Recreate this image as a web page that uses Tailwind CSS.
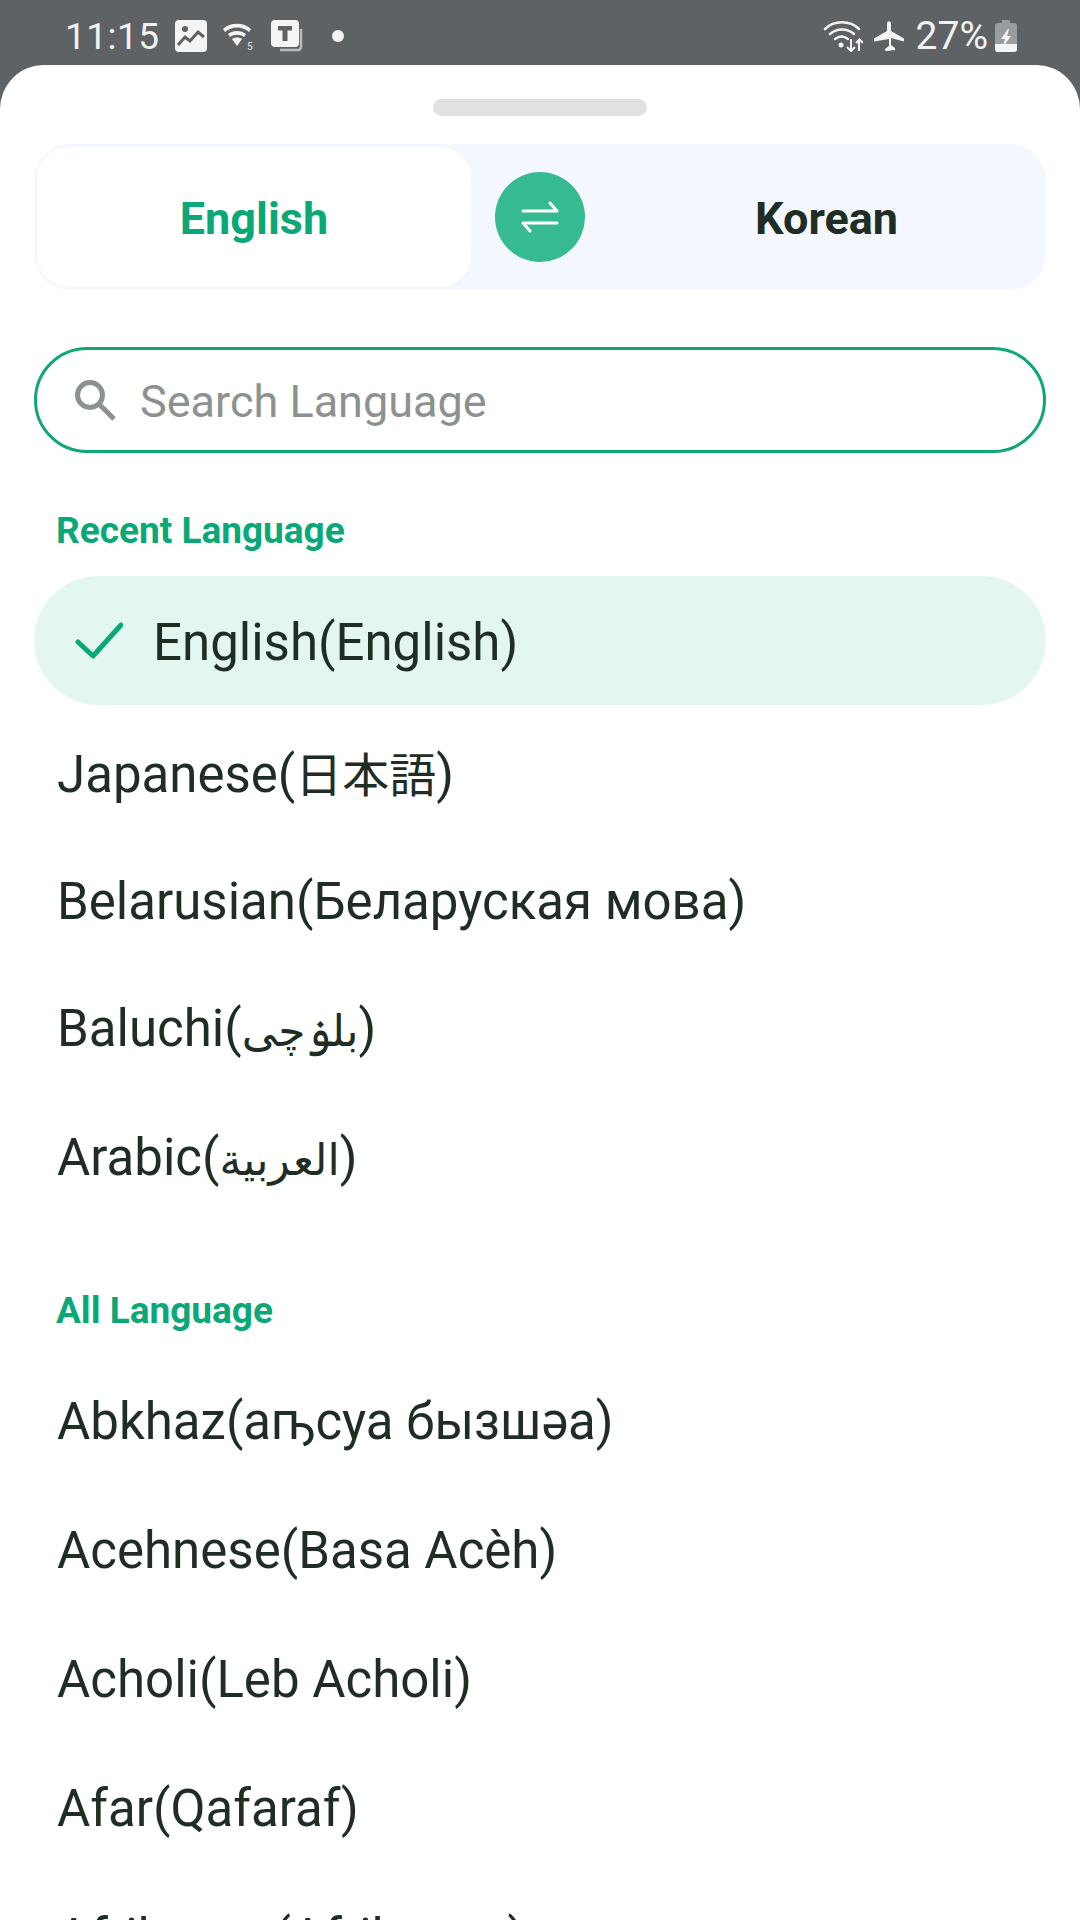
<!DOCTYPE html>
<html lang="en">
  <head>
    <meta charset="UTF-8" />
    <meta name="viewport" content="width=device-width, initial-scale=1.0" />
    <title>Select Language</title>
    <script src="https://cdn.jsdelivr.net/npm/@tailwindcss/browser@4"></script>
  </head>
  <body class="w-[1080px] h-[1920px] overflow-hidden bg-[#5f6265] font-['Roboto','Noto_Sans_CJK_JP','DejaVu_Sans',sans-serif]">
    <!-- Status bar -->
    <div class="h-[65px] flex items-center pt-[7px] pl-[65px] pr-[63px] text-[#f2f2f2]">
      <span class="text-[37px] leading-none tracking-[0.5px]">11:15</span>
      <svg class="ml-[15px]" width="32" height="32" viewBox="0 0 32 32">
        <rect width="32" height="32" rx="4" fill="#f4f4f4" />
        <circle cx="10" cy="9" r="3" fill="#5f6265" />
        <path d="M3 25l7-8 5 4 8-9 6 5" fill="none" stroke="#5f6265" stroke-width="3" />
      </svg>
      <svg class="ml-[15px]" width="32" height="30" viewBox="0 0 32 30">
        <path d="M1 8C8 1 22 1 29 8l-2 3C20 5 10 5 3 11z" fill="#f4f4f4" />
        <path d="M6 13c5-4 13-4 18 0l-2 3c-4-3-10-3-14 0z" fill="#f4f4f4" />
        <path d="M10 18c3-2 7-2 10 0l-5 7z" fill="#f4f4f4" />
        <text x="25" y="29" font-size="10" fill="#e4e4e4">5</text>
      </svg>
      <svg class="ml-[17px]" width="32" height="32" viewBox="0 0 32 32">
        <path d="M30 9v18a3 3 0 0 1-3 3H9" fill="none" stroke="#b9bbb9" stroke-width="2.500" />
        <rect width="28" height="27" rx="4" fill="#f4f4f4" />
        <path d="M7 6h14v4.500h-4.500V21h-5V10.500H7z" fill="#5f6265" />
      </svg>
      <span class="ml-[29px] w-[12px] h-[12px] rounded-full bg-[#f4f4f4]"></span>
      <span class="flex-1"></span>
      <svg width="40" height="32" viewBox="0 0 40 32">
        <path d="M2 9C11 0 27 0 36 9M7 14c7-6 17-6 24 0M12 19c4-3 9-3 13 0" fill="none" stroke="#f4f4f4" stroke-width="2.500" stroke-linecap="round" />
        <circle cx="18" cy="25" r="2.500" fill="#f4f4f4" />
        <path d="M28 18v12M24 26l4 4 4-4" transform="translate(0 1)" fill="none" stroke="#f4f4f4" stroke-width="2" />
        <path d="M36 31V20M33 23l3.500-3.500L40 23" fill="none" stroke="#f4f4f4" stroke-width="2" />
      </svg>
      <svg class="ml-[10px]" width="32" height="30" viewBox="0 0 32 30">
        <path d="M14 2.500c0-3 4-3 4 0V10l13 7.500v3L18 17v7l4 3v2.500l-2-.5-2 .5-6 1v-2.500l4-3v-7L1 20.500v-3L14 10z" fill="#f4f4f4" />
      </svg>
      <span class="ml-[11px] text-[39px] leading-none">27%</span>
      <svg class="ml-[7px]" width="22" height="32" viewBox="0 0 22 32">
        <path d="M7 0h8v3h4a3 3 0 0 1 3 3v23a3 3 0 0 1-3 3H3a3 3 0 0 1-3-3V6a3 3 0 0 1 3-3h4z" fill="#9a9c9d" />
        <path d="M0 24h22v5a3 3 0 0 1-3 3H3a3 3 0 0 1-3-3z" fill="#f4f4f4" />
        <path d="M13 9l-7 10h4l-2 8 8-11h-4l2-7z" fill="#f4f4f4" />
      </svg>
    </div>

    <!-- Bottom sheet -->
    <div class="h-[1855px] bg-white rounded-t-[44px] px-[34px] pt-[34px]">
      <div class="w-[214px] h-[17px] mx-auto rounded-full bg-[#dfe2df]"></div>

      <!-- Source / target toggle -->
      <div class="relative mt-[28px] h-[146px] rounded-[36px] bg-[#f4f8fe] p-[3px] flex items-center">
        <div class="w-[434px] shrink-0 h-[140px] rounded-[32px] bg-white flex items-center justify-center pt-[4px] text-[45px] font-bold text-[#0aa877]">English</div>
        <div class="absolute left-[461px] top-[28px] w-[90px] h-[90px] rounded-full bg-[#36ba92] flex items-center justify-center">
          <svg width="38" height="38" viewBox="0 0 38 38" fill="none" stroke="#fff" stroke-width="3" stroke-linecap="round" stroke-linejoin="round">
            <path d="M2 13h34l-7-8" />
            <path d="M36 25H2l7 8" />
          </svg>
        </div>
        <div class="flex-1 pl-[284px] pt-[4px] text-[45px] font-bold text-[#1f2d24]">Korean</div>
      </div>

      <!-- Search -->
      <div class="mt-[57px] h-[106px] rounded-full border-[3px] border-[#0fa678] flex items-center pl-[36px]">
        <svg width="44" height="44" viewBox="0 0 44 44" fill="none" stroke="#8c928e" stroke-width="5">
          <circle cx="17" cy="17" r="12.500" />
          <path d="M26 26l15 15" />
        </svg>
        <span class="ml-[23px] pt-[4px] text-[45px] text-[#8c928e]">Search Language</span>
      </div>

      <!-- Recent -->
      <div class="mt-[55px] pl-[22px] h-[46px] flex items-center text-[37px] font-bold text-[#0aa877]">Recent Language</div>
      <div class="mt-[22px] h-[129px] rounded-full bg-[#e3f6f0] flex items-center pl-[41px] text-[51px] text-[#1f2d24]">
        <svg width="48" height="38" viewBox="0 0 48 38" fill="none" stroke="#0aa877" stroke-width="5" stroke-linecap="round" stroke-linejoin="round">
          <path d="M3 20l15 14L46 3" />
        </svg>
        <span class="ml-[30px] pt-[5px]">English(English)</span>
      </div>
      <div class="mt-[6px] pl-[23px] text-[51px] text-[#1f2d24]">
        <div class="h-[129px] flex items-center"><span>Japanese(<span class="text-[47px]">日本語</span>)</span></div>
        <div class="h-[125px] flex items-center">Belarusian(Беларуская мова)</div>
        <div class="h-[129px] flex items-center"><span>Baluchi(<span class="text-[44px]">بلۏچی</span>)</span></div>
        <div class="h-[129px] flex items-center"><span>Arabic(<span class="text-[44px]">العربية</span>)</span></div>
      </div>

      <!-- All -->
      <div class="mt-[65px] pl-[22px] h-[46px] flex items-center text-[37px] font-bold text-[#0aa877]">All Language</div>
      <div class="mt-[24px] pl-[23px] text-[51px] text-[#1f2d24]">
        <div class="h-[129px] flex items-center">Abkhaz(аҧсуа бызшәа)</div>
        <div class="h-[129px] flex items-center">Acehnese(Basa Acèh)</div>
        <div class="h-[129px] flex items-center">Acholi(Leb Acholi)</div>
        <div class="h-[129px] flex items-center">Afar(Qafaraf)</div>
        <div class="h-[129px] flex items-center">Afrikaans(Afrikaans)</div>
      </div>
    </div>
  </body>
</html>
